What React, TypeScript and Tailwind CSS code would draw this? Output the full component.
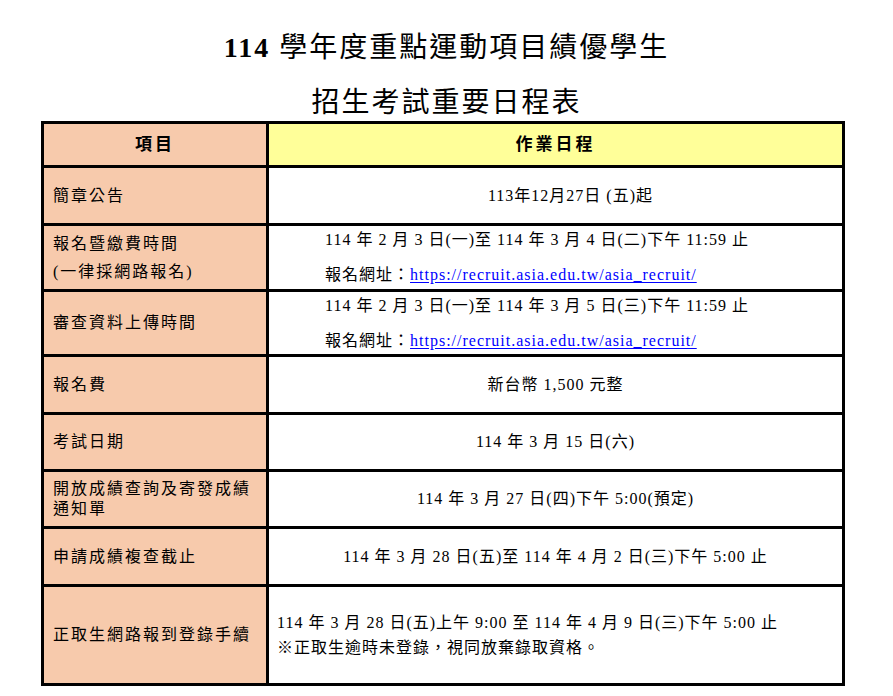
const serif = "font-['Liberation_Serif','Noto_Sans_CJK_TC',serif]";

type Row = {
  label: React.ReactNode;
  height: string;
  body: React.ReactNode;
};

const link = (
  <a
    href="https://recruit.asia.edu.tw/asia_recruit/"
    className="text-[#0000ff] underline underline-offset-2"
  >
    https://recruit.asia.edu.tw/asia_recruit/
  </a>
);

const rows: Row[] = [
  {
    label: "簡章公告",
    height: "h-[55px]",
    body: (
      <div className="flex h-full items-center justify-center pl-[30px]">113年12月27日 (五)起</div>
    ),
  },
  {
    label: (
      <div className="flex flex-col gap-[8px]">
        <span>報名暨繳費時間</span>
        <span>(一律採網路報名)</span>
      </div>
    ),
    height: "h-[63px]",
    body: (
      <div className="flex flex-col gap-[15px] pl-[56px] pt-[4px]">
        <span>114 年 2 月 3 日(一)至 114 年 3 月 4 日(二)下午 11:59 止</span>
        <span>報名網址：{link}</span>
      </div>
    ),
  },
  {
    label: "審查資料上傳時間",
    height: "h-[62px]",
    body: (
      <div className="flex flex-col gap-[15px] pl-[56px] pt-[4px]">
        <span>114 年 2 月 3 日(一)至 114 年 3 月 5 日(三)下午 11:59 止</span>
        <span>報名網址：{link}</span>
      </div>
    ),
  },
  {
    label: "報名費",
    height: "h-[55px]",
    body: <div className="flex h-full items-center justify-center">新台幣 1,500 元整</div>,
  },
  {
    label: "考試日期",
    height: "h-[54px]",
    body: <div className="flex h-full items-center justify-center">114 年 3 月 15 日(六)</div>,
  },
  {
    label: (
      <div className="flex flex-col">
        <span>開放成績查詢及寄發成績</span>
        <span>通知單</span>
      </div>
    ),
    height: "h-[54px]",
    body: (
      <div className="flex h-full items-center justify-center">114 年 3 月 27 日(四)下午 5:00(預定)</div>
    ),
  },
  {
    label: "申請成績複查截止",
    height: "h-[55px]",
    body: (
      <div className="flex h-full items-center justify-center">
        114 年 3 月 28 日(五)至 114 年 4 月 2 日(三)下午 5:00 止
      </div>
    ),
  },
  {
    label: "正取生網路報到登錄手續",
    height: "h-[96px]",
    body: (
      <div className="flex h-full flex-col justify-center pl-[8px] leading-[25px]">
        <span>114 年 3 月 28 日(五)上午 9:00 至 114 年 4 月 9 日(三)下午 5:00 止</span>
        <span>※正取生逾時未登錄，視同放棄錄取資格。</span>
      </div>
    ),
  },
];

export default function App() {
  return (
    <div className={`min-h-[696px] w-[893px] bg-white text-black ${serif}`}>
      <div className="pt-[30px] text-center text-[28px] leading-[36px] tracking-[2px]">
        <div>
          <span className="font-bold">114</span> 學年度重點運動項目績優學生
        </div>
        <div className="mt-[19px]">招生考試重要日程表</div>
      </div>

      <div className="ml-[41px] w-[804px] border-[3px] border-black">
        <div className="flex h-[44px] border-b-[3px] border-black text-[17px] font-bold tracking-[3px]">
          <div className="flex w-[225px] shrink-0 items-center justify-center border-r-[3px] border-black bg-[#f7caac]">
            項目
          </div>
          <div className="flex flex-1 items-center justify-center bg-[#ffff99]">作業日程</div>
        </div>

        {rows.map((row, i) => (
          <div
            key={i}
            className={`flex ${i < rows.length - 1 ? "border-b-[3px]" : ""} border-black text-[16px] leading-[20px]`}
          >
            <div
              className={`flex w-[225px] shrink-0 items-center border-r-[3px] border-black bg-[#f7caac] pl-[9px] tracking-[2px] ${row.height}`}
            >
              {row.label}
            </div>
            <div className={`flex-1 tracking-[1px] ${row.height}`}>{row.body}</div>
          </div>
        ))}
      </div>
    </div>
  );
}
